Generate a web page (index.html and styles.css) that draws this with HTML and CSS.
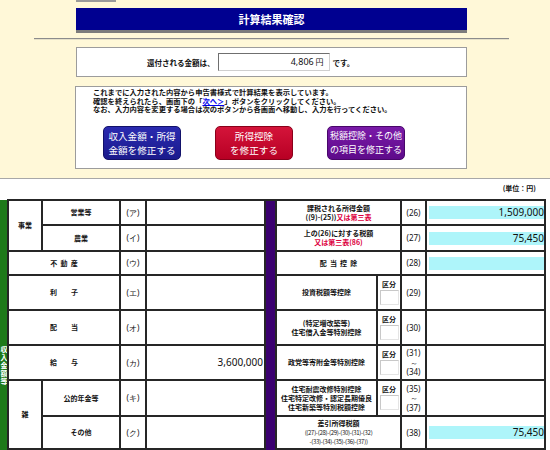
FILE: index.html
```html
<!DOCTYPE html>
<html lang="ja">
<head>
<meta charset="utf-8">
<title>計算結果確認</title>
<link rel="stylesheet" href="styles.css">
</head>
<body>
<div class="page">
  <div class="stub"></div>
  <h1 class="title">計算結果確認</h1>
  <hr class="rule">
  <div class="refund">
    <span class="refund-label">還付される金額は、</span>
    <span class="amount"><span class="num">4,806</span> 円</span>
    <span class="refund-label">です。</span>
  </div>
  <div class="info">
    <p class="info-text">これまでに入力された内容から申告書様式で計算結果を表示しています。<br>確認を終えられたら、画面下の「<a href="#" class="link">次へ＞</a>」ボタンをクリックしてください。<br>なお、入力内容を変更する場合は次のボタンから各画面へ移動し、入力を行ってください。</p>
    <div class="btns">
      <a href="#" class="btn btn-blue">収入金額・所得<br>金額を修正する</a>
      <a href="#" class="btn btn-red">所得控除<br>を修正する</a>
      <a href="#" class="btn btn-purple">税額控除・その他<br>の項目を修正する</a>
    </div>
  </div>
  <div class="sheet">
    <div class="unit">(単位：円)</div>
    <table class="calc">
      <colgroup>
        <col class="w-g"><col class="w-a"><col class="w-b"><col class="w-c"><col class="w-d">
        <col class="w-p"><col class="w-r1"><col class="w-r2"><col class="w-r3"><col class="w-r4">
      </colgroup>
      <tr class="h1">
        <td class="green" rowspan="9"><div class="vtext">収入金額等</div></td>
        <td rowspan="2">事業</td>
        <td>営業等</td>
        <td class="kana">(ア)</td>
        <td class="val"></td>
        <td class="purple" rowspan="9"></td>
        <td colspan="2">課税される所得金額<br>((9)-(25))<span class="red">又は第三表</span></td>
        <td class="no">(26)</td>
        <td class="val"><span class="cyan">1,509,000</span></td>
      </tr>
      <tr class="h2">
        <td>農業</td>
        <td class="kana">(イ)</td>
        <td class="val"></td>
        <td colspan="2">上の(26)に対する税額<br><span class="red">又は第三表(86)</span></td>
        <td class="no">(27)</td>
        <td class="val"><span class="cyan">75,450</span></td>
      </tr>
      <tr class="h3">
        <td colspan="2">不&nbsp;&nbsp;動&nbsp;&nbsp;産</td>
        <td class="kana">(ウ)</td>
        <td class="val"></td>
        <td colspan="2">配&nbsp;&nbsp;当&nbsp;&nbsp;控&nbsp;&nbsp;除</td>
        <td class="no">(28)</td>
        <td class="val"><span class="cyan"></span></td>
      </tr>
      <tr class="h4">
        <td colspan="2">利&emsp;&emsp;子</td>
        <td class="kana">(エ)</td>
        <td class="val"></td>
        <td>投資税額等控除</td>
        <td class="kubun">区分<span class="kbox"></span></td>
        <td class="no">(29)</td>
        <td class="val"></td>
      </tr>
      <tr class="h5">
        <td colspan="2">配&emsp;&emsp;当</td>
        <td class="kana">(オ)</td>
        <td class="val"></td>
        <td>(特定増改築等)<br>住宅借入金等特別控除</td>
        <td class="kubun">区分<span class="kbox"></span></td>
        <td class="no">(30)</td>
        <td class="val"></td>
      </tr>
      <tr class="h6">
        <td colspan="2">給&emsp;&emsp;与</td>
        <td class="kana">(カ)</td>
        <td class="val"><span class="plain">3,600,000</span></td>
        <td>政党等寄附金等特別控除</td>
        <td class="kubun">区分<span class="kbox"></span></td>
        <td class="no">(31)<br>～<br>(34)</td>
        <td class="val"></td>
      </tr>
      <tr class="h7">
        <td rowspan="2">雑</td>
        <td>公的年金等</td>
        <td class="kana">(キ)</td>
        <td class="val"></td>
        <td>住宅耐震改修特別控除<br>住宅特定改修・認定長期優良<br>住宅新築等特別税額控除</td>
        <td class="kubun">区分<span class="kbox"></span></td>
        <td class="no">(35)<br>～<br>(37)</td>
        <td class="val"></td>
      </tr>
      <tr class="h8">
        <td>その他</td>
        <td class="kana">(ク)</td>
        <td class="val"></td>
        <td colspan="2">差引所得税額<br><span class="tiny">((27)-(28)-(29)-(30)-(31)-(32)<br>-(33)-(34)-(35)-(36)-(37))</span></td>
        <td class="no">(38)</td>
        <td class="val"><span class="cyan">75,450</span></td>
      </tr>
      <tr class="h9">
        <td colspan="2"></td>
        <td class="kana"></td>
        <td class="val"></td>
        <td colspan="2"></td>
        <td class="no"></td>
        <td class="val"></td>
      </tr>
    </table>
  </div>
</div>
</body>
</html>
```

FILE: styles.css
```css
html, body {
  margin: 0;
  padding: 0;
}
body {
  background: #fff8d8;
  font-family: "Noto Sans CJK JP", "Noto Sans", sans-serif;
  color: #111;
}
.page {
  width: 550px;
  height: 450px;
  overflow: hidden;
}
.stub {
  margin-left: 76px;
  width: 40px;
  height: 2px;
  background: #9a9a9a;
}
.title {
  margin: 6px 0 0 76px;
  width: 391px;
  height: 22px;
  background: #000090;
  color: #fff;
  font-size: 11px;
  font-weight: bold;
  line-height: 22px;
  text-align: center;
  box-shadow: 0 3px 0 #7c7c7c;
}
.rule {
  margin: 8px 0 0 34px;
  width: 475px;
  height: 0;
  border: 0;
  border-top: 1px solid #8c8c8c;
  border-bottom: 1px solid #e6e1c8;
}
.refund {
  margin: 7px 0 0 76px;
  width: 391px;
  height: 30px;
  box-sizing: border-box;
  border: 1px solid #9c9c9c;
  background: #fff;
  display: flex;
  align-items: center;
  gap: 3px;
  padding-left: 70px;
}
.refund-label {
  font-size: 7.5px;
  font-weight: bold;
}
.amount {
  width: 112px;
  height: 18px;
  box-sizing: border-box;
  border: 1px solid;
  border-color: #6f6f6f #cfcfcf #cfcfcf #6f6f6f;
  text-align: right;
  padding-right: 5px;
  font-size: 8px;
  line-height: 16px;
}
.amount .num {
  font-family: "Noto Sans", sans-serif;
  font-size: 9px;
}
.info {
  margin: 9px 0 0 75px;
  width: 392px;
  height: 83px;
  box-sizing: border-box;
  border: 1px solid #9c9c9c;
  background: #fff;
  padding: 1px 0 0 17px;
}
.info-text {
  margin: 0;
  font-size: 7.3px;
  line-height: 8.6px;
  font-weight: bold;
}
.link {
  color: #0000ee;
  text-decoration: underline;
}
.btns {
  display: flex;
  gap: 34px;
  margin: 12px 0 0 10px;
}
.btn {
  width: 78px;
  height: 34px;
  box-sizing: border-box;
  border-radius: 5px;
  display: flex;
  align-items: center;
  justify-content: center;
  text-align: center;
  white-space: nowrap;
  color: #fff;
  font-size: 9.6px;
  line-height: 14px;
  text-decoration: none;
}
.btn-blue {
  background: linear-gradient(#2a2ab0, #1a1a8c);
  border: 1px solid #12126a;
}
.btn-red {
  background: linear-gradient(#d4143a, #b80024);
  border: 1px solid #8a001a;
}
.btn-purple {
  background: linear-gradient(#7a1aa8, #5e0a8a);
  border: 1px solid #48066a;
  font-size: 9px;
}
.sheet {
  margin-top: 9px;
  background: #fff;
  border-top: 1px solid #a8a8a8;
  height: 300px;
}
.unit {
  height: 20px;
  box-sizing: border-box;
  padding: 2px 14px 0 0;
  text-align: right;
  font-size: 7px;
  font-weight: bold;
  line-height: 14px;
}
.calc {
  border-collapse: collapse;
  table-layout: fixed;
  width: 546px;
  font-size: 7px;
  font-weight: bold;
}
.w-g { width: 8px; }
.w-a { width: 34px; }
.w-b { width: 78px; }
.w-c { width: 26px; }
.w-d { width: 119px; }
.w-p { width: 11px; }
.w-r1 { width: 101px; }
.w-r2 { width: 24px; }
.w-r3 { width: 25px; }
.w-r4 { width: 119px; }
.calc td {
  border: 2px solid #262626;
  padding: 0;
  text-align: center;
  vertical-align: middle;
  line-height: 9px;
  overflow: hidden;
}
.h1 { height: 25px; }
.h2 { height: 26px; }
.h3 { height: 24px; }
.h4 { height: 35px; }
.h5 { height: 35px; }
.h6 { height: 35px; }
.h7 { height: 36px; }
.h8 { height: 33px; }
.h9 { height: 35px; }
.calc td.green {
  background: #1e7a1a;
  border-left: 0;
  border-top: 0;
  vertical-align: top;
  padding-top: 146px;
}
.vtext {
  writing-mode: vertical-rl;
  width: 7px;
  color: #fff;
  font-size: 7px;
  line-height: 7px;
  letter-spacing: 1px;
}
.calc td.purple {
  background: #3a006f;
}
.calc td.kana,
.calc td.no {
  font-family: "Noto Sans", sans-serif;
  font-weight: normal;
  font-size: 8px;
  line-height: 9.5px;
}
.red {
  color: #dc0040;
}
.calc td.val {
  text-align: right;
}
.cyan {
  display: block;
  height: 13px;
  margin-left: 2px;
  background: #aef5fa;
  font-family: "Noto Sans", sans-serif;
  font-weight: normal;
  font-size: 10px;
  line-height: 13px;
}
.plain {
  display: block;
  padding-right: 1px;
  font-family: "Noto Sans", sans-serif;
  font-weight: normal;
  font-size: 10px;
  line-height: 13px;
}
.calc td.kubun {
  vertical-align: top;
  padding-top: 4px;
}
.kbox {
  display: block;
  width: 19px;
  height: 15px;
  box-sizing: border-box;
  margin: 1px auto 0;
  border: 1px solid;
  border-color: #c8c8c8 #e4e4e4 #e4e4e4 #c8c8c8;
  background: #fff;
}
.tiny {
  font-size: 6px;
  letter-spacing: -0.3px;
  font-weight: normal;
}
```
